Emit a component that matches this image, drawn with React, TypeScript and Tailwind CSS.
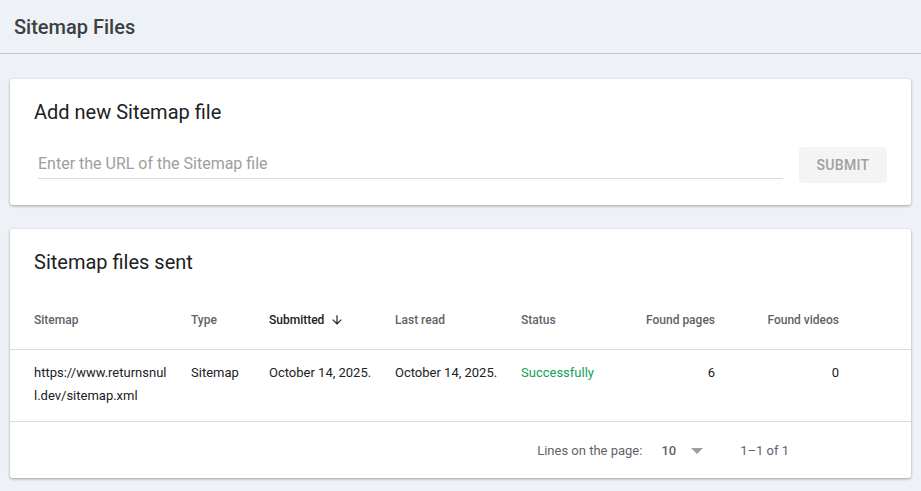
import React from "react";

const font = { fontFamily: "Roboto, 'Noto Sans', Arial, sans-serif" };

function ArrowDown() {
  return (
    <svg width="14" height="14" viewBox="0 0 24 24" className="ml-[6px]" fill="#202124">
      <path d="M20 12l-1.41-1.41L13 16.17V4h-2v12.17l-5.58-5.59L4 12l8 8 8-8z" />
    </svg>
  );
}

export default function App() {
  return (
    <div className="min-h-[491px] w-full bg-[#eef2f7] text-[#202124]" style={font}>
      <header className="h-[54px] border-b border-[#c6c8cc] flex items-center px-[14px]">
        <h1 className="text-[20px] font-medium text-[#3c4043] leading-none">Sitemap Files</h1>
      </header>

      <div className="px-[10px] pt-[25px] flex flex-col gap-[24px]">
        <section className="bg-white rounded-[3px] shadow-[0_1px_3px_rgba(0,0,0,0.35)] px-[24px] h-[126px]">
          <h2 className="text-[20px] leading-none pt-[23px]">Add new Sitemap file</h2>
          <div className="flex items-end mt-[25px]">
            <div className="flex-1 ml-[4px] border-b border-[#dadce0] pt-[4px] pb-[2px]">
              <span className="text-[16px] text-[#9e9e9e] leading-none">Enter the URL of the Sitemap file</span>
            </div>
            <button className="ml-[16px] mb-[-4px] w-[88px] h-[36px] rounded-[4px] bg-[#f4f4f4] text-[#a0a0a0] text-[14px] font-medium tracking-[0.3px]">
              SUBMIT
            </button>
          </div>
        </section>

        <section className="bg-white rounded-[3px] shadow-[0_1px_3px_rgba(0,0,0,0.35)] h-[249px] flex flex-col">
          <h2 className="text-[20px] leading-none pt-[23px] px-[24px]">Sitemap files sent</h2>
          <div className="mt-[22px] h-[56px] flex items-center px-[24px] pb-[3px] border-b border-[#dadce0] text-[12px] font-medium text-[#5f6368]">
            <div className="w-[157px]">Sitemap</div>
            <div className="w-[78px]">Type</div>
            <div className="w-[126px] flex items-center text-[#202124]">
              Submitted
              <ArrowDown />
            </div>
            <div className="w-[126px]">Last read</div>
            <div className="w-[104px]">Status</div>
            <div className="w-[90px] text-right">Found pages</div>
            <div className="w-[124px] text-right">Found videos</div>
          </div>
          <div className="h-[72px] flex items-start px-[24px] pt-[11px] border-b border-[#dadce0] text-[13px] leading-[23px]">
            <div className="w-[157px] pr-[22px] break-all">https://www.returnsnull.dev/sitemap.xml</div>
            <div className="w-[78px]">Sitemap</div>
            <div className="w-[126px]">October 14, 2025.</div>
            <div className="w-[126px]">October 14, 2025.</div>
            <div className="w-[104px] text-[#12a05c]">Successfully</div>
            <div className="w-[90px] text-right">6</div>
            <div className="w-[124px] text-right">0</div>
          </div>
          <div className="flex-1 flex items-center justify-end pr-[122px] pt-[1px] text-[13px] text-[#5f6368]">
            <span>Lines on the page:</span>
            <span className="ml-[19px] font-medium">10</span>
            <svg width="12" height="6" viewBox="0 0 12 6" className="ml-[15px]">
              <path d="M0 0h12L6 6z" fill="#9e9e9e" />
            </svg>
            <span className="ml-[37px]">1–1 of 1</span>
          </div>
        </section>
      </div>
    </div>
  );
}
